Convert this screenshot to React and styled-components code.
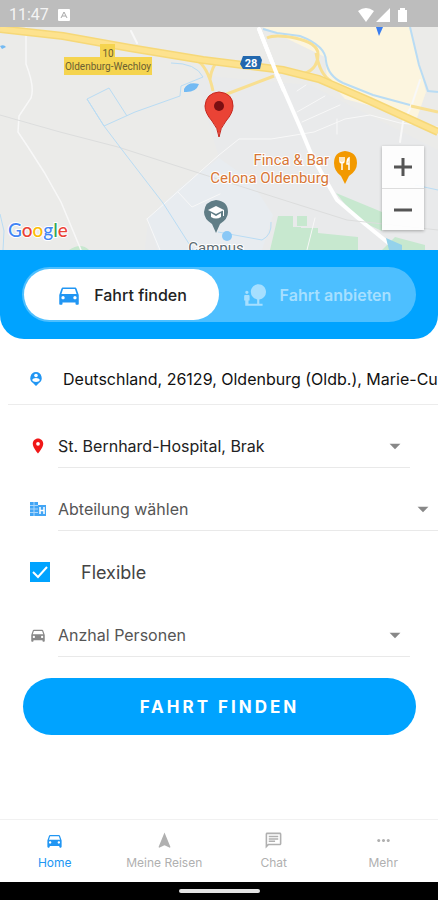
import React, { useState } from "react";
import styled, { createGlobalStyle } from "styled-components";
import {
  MdDirectionsCar, MdNaturePeople, MdLocationOn,
  MdArrowDropDown, MdNavigation, MdOutlineChat, MdMoreHoriz,
} from "react-icons/md";

const BLUE = "#00a3ff";

const GlobalStyle = createGlobalStyle`
  * { box-sizing: border-box; }
  body { margin: 0; background: #fff; font-family: Inter, "Open Sans", sans-serif; }
  button, input, select { font: inherit; color: inherit; margin: 0; }
`;

const Screen = styled.div`
  min-height: 100vh;
  display: flex;
  flex-direction: column;
  background: #fff;
  overflow: hidden;
`;

const StatusBar = styled.header`
  height: 27px;
  flex: none;
  display: flex;
  align-items: center;
  gap: 9px;
  padding: 2px 30px 0 9px;
  background: #bdbdbd;
  color: #f4f4f4;
  font: 16px/24px Roboto, sans-serif;
`;

const StatusIcons = styled.svg`
  margin-left: auto;
  display: block;
`;

const MapArea = styled.section`
  position: relative;
  height: 223px;
  flex: none;
  background: #ebebe9;
`;

const MapDrawing = styled.svg`
  display: block;
  width: 100%;
  height: 100%;
  font-family: Roboto, sans-serif;
`;

const ZoomControls = styled.div`
  position: absolute;
  right: 14px;
  bottom: 20px;
  width: 42px;
  display: grid;
  background: rgba(255, 255, 255, 0.9);
  box-shadow: 0 1px 3px rgba(0, 0, 0, 0.3);
`;

const ZoomButton = styled.button`
  height: 42px;
  padding: 0;
  display: grid;
  place-items: center;
  border: 0;
  background: none;
  color: #555;
  & + & { border-top: 1px solid #ddd; }
`;

const ModePanel = styled.div`
  padding: 17px 22px;
  background: ${BLUE};
  border-radius: 0 0 24px 24px;
`;

const ModeSwitch = styled.div`
  display: grid;
  grid-template-columns: 1fr 1fr;
  height: 55px;
  padding: 2px;
  border-radius: 28px;
  background: #4dbfff;
`;

const ModeButton = styled.button`
  display: flex;
  align-items: center;
  justify-content: center;
  gap: 12px;
  padding: 0;
  border: 0;
  border-radius: 26px;
  background: ${(p) => (p.$active ? "#fff" : "transparent")};
  color: ${(p) => (p.$active ? "#222" : "#a6dfff")};
  font-size: ${(p) => (p.$active ? 16 : 16)}px;
  font-weight: ${(p) => (p.$active ? 500 : 600)};
  white-space: nowrap;
  svg { flex: none; color: ${(p) => (p.$active ? "#2196f3" : "#a6dfff")}; }
`;

const Form = styled.form`
  display: flex;
  flex-direction: column;
  padding-bottom: 40px;
`;

const AddressRow = styled.label`
  display: flex;
  align-items: center;
  height: 66px;
  margin-left: 8px;
  padding: 14px 0 0 21px;
  gap: 19px;
  border-bottom: 1px solid #ececec;
  svg { flex: none; color: #2196f3; }
`;

const AddressInput = styled.input`
  flex: 1;
  min-width: 0;
  height: 32px;
  padding: 0;
  border: 0;
  outline: 0;
  background: none;
  color: #111;
  font-size: 16px;
`;

const SelectRow = styled.label`
  display: flex;
  align-items: center;
  gap: 11px;
  height: 44px;
  margin: 19px ${(p) => (p.$wide ? 0 : 28)}px 0 29px;
  > svg { flex: none; color: ${(p) => p.$tint}; }
`;

const SelectBox = styled.span`
  flex: 1;
  display: grid;
  align-items: center;
  height: 44px;
  border-bottom: 1px solid #e9e9e9;
  > * { grid-area: 1 / 1; }
  svg { justify-self: end; color: #888; pointer-events: none; margin-right: 2px; }
`;

const Select = styled.select`
  appearance: none;
  width: 100%;
  height: 42px;
  padding: 0 28px 0 0;
  border: 0;
  outline: 0;
  background: none;
  color: ${(p) => (p.$filled ? "#222" : "#555")};
  font-size: 16px;
`;

const CheckRow = styled.label`
  display: flex;
  align-items: center;
  gap: 31px;
  height: 44px;
  margin: 19px 30px 0;
  color: #444;
  font-size: 18px;
`;

const CheckBox = styled.span`
  display: grid;
  width: 20px;
  height: 20px;
  > * { grid-area: 1 / 1; }
  svg { pointer-events: none; }
`;

const CheckInput = styled.input`
  appearance: none;
  width: 20px;
  height: 20px;
  border: 2px solid ${BLUE};
  background: #fff;
  &:checked { background: ${BLUE}; }
`;

const SubmitButton = styled.button`
  height: 57px;
  margin: 21px 22px 0 23px;
  border: 0;
  border-radius: 29px;
  background: ${BLUE};
  color: #fff;
  font-size: 17px;
  font-weight: 700;
  letter-spacing: 3px;
`;

const TabBar = styled.nav`
  margin-top: auto;
  display: grid;
  grid-template-columns: repeat(4, 1fr);
  height: 63px;
  flex: none;
  border-top: 1px solid #f1f1f1;
`;

const TabLink = styled.a`
  display: flex;
  flex-direction: column;
  align-items: center;
  gap: 5px;
  padding-top: 11px;
  color: ${(p) => (p.$active ? "#2196f3" : "#b0b0b0")};
  font-size: 12px;
  line-height: 16px;
  text-decoration: none;
`;

const SystemBar = styled.footer`
  display: grid;
  place-items: center;
  height: 18px;
  flex: none;
  background: #000;
`;

const HomeHandle = styled.div`
  width: 81px;
  height: 4px;
  border-radius: 2px;
  background: #e4e4e4;
`;

function CityMap() {
  return (
    <MapDrawing viewBox="0 27 438 223" preserveAspectRatio="xMidYMid slice" role="img" aria-label="Karte Oldenburg">
      <rect y="27" width="438" height="223" fill="#ebebe9" />
      <path d="M195 75L310 85L438 150V250H145L148 219L218 155Z" fill="#e9eaeb" />
      <path d="M147 219L180 188L219 158L250 180L273 215L262 250H158Z" fill="#e8ecf0" />
      <path d="M263 27H410L426 92L417 118L345 99L327 79L325 57Z" fill="#fcf5df" />
      <path d="M278 216H293V227H301V228H318V250H270Z M297 216H307V226H297Z M318 233L358 237V250H315Z M336 193L382 212V231L358 220Z M395 237L425 245V250H382Z" fill="#c7e8cf" />
      <path d="M69 250Q81 242 89 250Z" fill="#c7e8cf" />
      <g fill="none" stroke="#f8f8f8" strokeLinecap="round">
        <path d="M26 28V64Q35 87 31 98L19 116L18 132L28 147L44 172L61 202L81 250" strokeWidth="1.5" />
        <path d="M147 219L219 155L239 139H271L314 132L345 119L370 115L400 123L438 127" strokeWidth="1" />
        <path d="M147 219L160 250M178 192L192 207L220 194M297 112L325 96M297 91L306 85M302 122L340 105M337 134V119M315 218L307 250" strokeWidth="1" />
        <path d="M131 31L137 43M420 80L411 107L403 122L400 142" strokeWidth="2" />
        <path d="M259 29L276 72L300 127L312 156L337 200L365 224L397 250" stroke="#fff" strokeWidth="4" />
      </g>
      <path d="M0 115L60 132L118 147L205 175L293 203L347 220L438 230" fill="none" stroke="#dcdddd" />
      <g fill="none" stroke="#b9dcf4">
        <path d="M87 99L109 88L127 116M87 99L104 126ZM104 126L135 112L180 96L181 86L203 77Q196 63 171 63" strokeWidth="1" />
        <path d="M104 126L126 155L163 203L193 250M0 214L4 231L3 250" strokeWidth="1" />
        <path d="M263 29L277 33L300 36Q326 46 326 61Q328 76 343 83L373 95L410 105M410 27L419 65L428 91L438 92" strokeWidth="2" />
        <path d="M218 232L262 240Q272 235 271 222M415 185L438 190" strokeWidth="1" />
      </g>
      <path d="M0 46Q4 44 6 47L2 49Z M184 89Q188 81 199 84Q196 93 184 92Z" fill="#73baf3" />
      <circle cx="227" cy="236" r="5" fill="#8ac8f6" />
      <path d="M386 238L402 245V250H389Z" fill="#94d2eb" />
      <g fill="none" stroke="#f8df91">
        <path d="M195 59Q208 66 213 91M210 79Q212 65 219 61M219 97L274 76M298 75Q318 72 318 54Q318 43 295 38Q275 34 267 38M316 53Q320 75 331 81M411 106L438 112" strokeWidth="3" />
        <path d="M0 29L63 36L130 48L203 60L283 70L319 79L370 101L438 132" strokeWidth="8" stroke="#f6d878" />
        <path d="M0 29L63 36L130 48L203 60L283 70L319 79L370 101L438 132" strokeWidth="5" stroke="#fde28e" />
      </g>
      <path d="M259 29L276 72L284 91" fill="none" stroke="#fff" strokeWidth="4" />
      <path d="M100 44H115V58H100Z M64 57H152V75H64Z" fill="#f5d44f" />
      <g fill="#6b6032" textAnchor="middle" fontSize="10">
        <text x="108" y="57">10</text>
        <text x="108" y="70">Oldenburg-Wechloy</text>
      </g>
      <path d="M243 56H260L262 60L260 69H243L240 64Z" fill="#2368ae" />
      <text x="251" y="67" fill="#fff" fontSize="11" fontWeight="700" textAnchor="middle">28</text>
      <path d="M376 27H383L379 36Z" fill="#397df0" />
      <path d="M219 92Q233 93 233 106Q233 113 226 121Q220 128 219 137Q218 128 212 121Q205 113 205 106Q206 93 219 92Z" fill="#ea4335" stroke="#c6261d" />
      <circle cx="219" cy="106" r="5" fill="#7a0f12" />
      <g fill="#d77636" stroke="#fff" strokeWidth="2" paintOrder="stroke" textAnchor="end" fontSize="15">
        <text x="329" y="165">Finca &amp; Bar</text>
        <text x="329" y="183">Celona Oldenburg</text>
      </g>
      <path d="M345 151Q357 152 357 163Q357 171 349 176L345 184L341 176Q334 171 334 163Q334 152 345 151Z" fill="#f29900" />
      <path d="M340 157V161Q340 163 342 163Q344 163 344 161V157M342 157V170M349 170V158Q347 159 347 164H349" fill="none" stroke="#fff" strokeWidth="1.5" />
      <path d="M216 200Q228 201 228 212Q228 219 220 224L216 233L212 224Q204 219 204 212Q205 201 216 200Z" fill="#607d86" />
      <path d="M208 210L216 206L224 210L216 214Z M211 213L216 216L221 213V217Q216 220 211 217Z M223 210H224V216H223Z" fill="#fff" />
      <text x="216" y="253" fill="#5d6c73" stroke="#fff" strokeWidth="2" paintOrder="stroke" textAnchor="middle" fontSize="15">Campus</text>
      <text x="8" y="237" fontSize="19" fontFamily="Lato, sans-serif" fontWeight="500" stroke="#fff" strokeWidth="2" paintOrder="stroke">
        <tspan fill="#4285f4">G</tspan><tspan fill="#ea4335">o</tspan><tspan fill="#fbbc05">o</tspan><tspan fill="#4285f4">g</tspan><tspan fill="#34a853">l</tspan><tspan fill="#ea4335">e</tspan>
      </text>
    </MapDrawing>
  );
}

function PersonPinIcon() {
  return (
    <svg width="15" height="15" viewBox="0 0 15 15" aria-hidden="true">
      <path d="M7 1A6 6 0 0 1 10 12L7 15L4 12A6 6 0 0 1 7 1Z" fill="currentColor" />
      <circle cx="7" cy="4.5" r="1.8" fill="#fff" />
      <path d="M3 9Q4 7 7 7T11 9Q10 11 7 11T3 9Z" fill="#fff" />
    </svg>
  );
}

function ClinicIcon() {
  return (
    <svg width="18" height="16" viewBox="0 0 18 16" aria-hidden="true">
      <path d="M1 1H9V15H1Z" fill="currentColor" />
      <path d="M1 4.5H9M1 8H9M1 11.5H9M5 1V15" stroke="#a9d6fb" strokeWidth="1" />
      <path d="M9 4H17V15H9Z" fill="currentColor" />
      <path d="M11 6V13M15 6V13M11 9.5H15" stroke="#fff" strokeWidth="1.5" />
    </svg>
  );
}

function SelectField({ icon, tint, label, wide, filled }) {
  return (
    <SelectRow $tint={tint} $wide={wide}>
      {icon}
      <SelectBox>
        <Select $filled={filled} aria-label={label}><option>{label}</option></Select>
        <MdArrowDropDown size={26} aria-hidden="true" />
      </SelectBox>
    </SelectRow>
  );
}

export default function App() {
  const [mode, setMode] = useState("find");
  const [flexible, setFlexible] = useState(true);
  return (
    <Screen>
      <GlobalStyle />
      <StatusBar>
        <span>11:47</span>
        <svg width="12" height="12" viewBox="0 0 12 12" aria-hidden="true">
          <rect width="12" height="12" rx="1" fill="#fff" />
          <path d="M3 9L6 3L9 9M4 7H8" fill="none" stroke="#aaa" />
        </svg>
        <StatusIcons width="50" height="16" viewBox="0 0 50 16" aria-hidden="true">
          <path d="M0 4Q8 -2 16 4L8 15Z M32 1V15H18Z M40 3H42V1H47V3H49V15H40Z" fill="#fff" />
        </StatusIcons>
      </StatusBar>
      <MapArea>
        <CityMap />
        <ZoomControls>
          <ZoomButton aria-label="Vergrößern">
            <svg width="20" height="20" viewBox="0 0 20 20"><path d="M1 10H19M10 1V19" stroke="currentColor" strokeWidth="3" /></svg>
          </ZoomButton>
          <ZoomButton aria-label="Verkleinern">
            <svg width="20" height="20" viewBox="0 0 20 20"><path d="M1 10H19" stroke="currentColor" strokeWidth="3" /></svg>
          </ZoomButton>
        </ZoomControls>
      </MapArea>
      <ModePanel>
        <ModeSwitch>
          <ModeButton type="button" $active={mode === "find"} onClick={() => setMode("find")}>
            <MdDirectionsCar size={26} />Fahrt finden
          </ModeButton>
          <ModeButton type="button" $active={mode === "offer"} onClick={() => setMode("offer")}>
            <MdNaturePeople size={26} />Fahrt anbieten
          </ModeButton>
        </ModeSwitch>
      </ModePanel>
      <Form onSubmit={(e) => e.preventDefault()}>
        <AddressRow>
          <PersonPinIcon />
          <AddressInput aria-label="Startadresse" defaultValue="Deutschland, 26129, Oldenburg (Oldb.), Marie-Curie-Straße" />
        </AddressRow>
        <SelectField icon={<MdLocationOn size={18} />} tint="#f01818" label="St. Bernhard-Hospital, Brak" filled />
        <SelectField icon={<ClinicIcon />} tint="#42a5f5" label="Abteilung wählen" wide />
        <CheckRow>
          <CheckBox>
            <CheckInput type="checkbox" checked={flexible} onChange={(e) => setFlexible(e.target.checked)} />
            <svg width="20" height="20" viewBox="0 0 20 20"><path d="M3 10L8 15L17 5" fill="none" stroke="#fff" strokeWidth="2" /></svg>
          </CheckBox>
          Flexible
        </CheckRow>
        <SelectField icon={<MdDirectionsCar size={18} />} tint="#888" label="Anzhal Personen" />
        <SubmitButton type="submit">FAHRT FINDEN</SubmitButton>
      </Form>
      <TabBar>
        <TabLink href="#home" $active><MdDirectionsCar size={19} />Home</TabLink>
        <TabLink href="#reisen"><MdNavigation size={19} />Meine Reisen</TabLink>
        <TabLink href="#chat"><MdOutlineChat size={19} />Chat</TabLink>
        <TabLink href="#mehr"><MdMoreHoriz size={19} />Mehr</TabLink>
      </TabBar>
      <SystemBar><HomeHandle /></SystemBar>
    </Screen>
  );
}
